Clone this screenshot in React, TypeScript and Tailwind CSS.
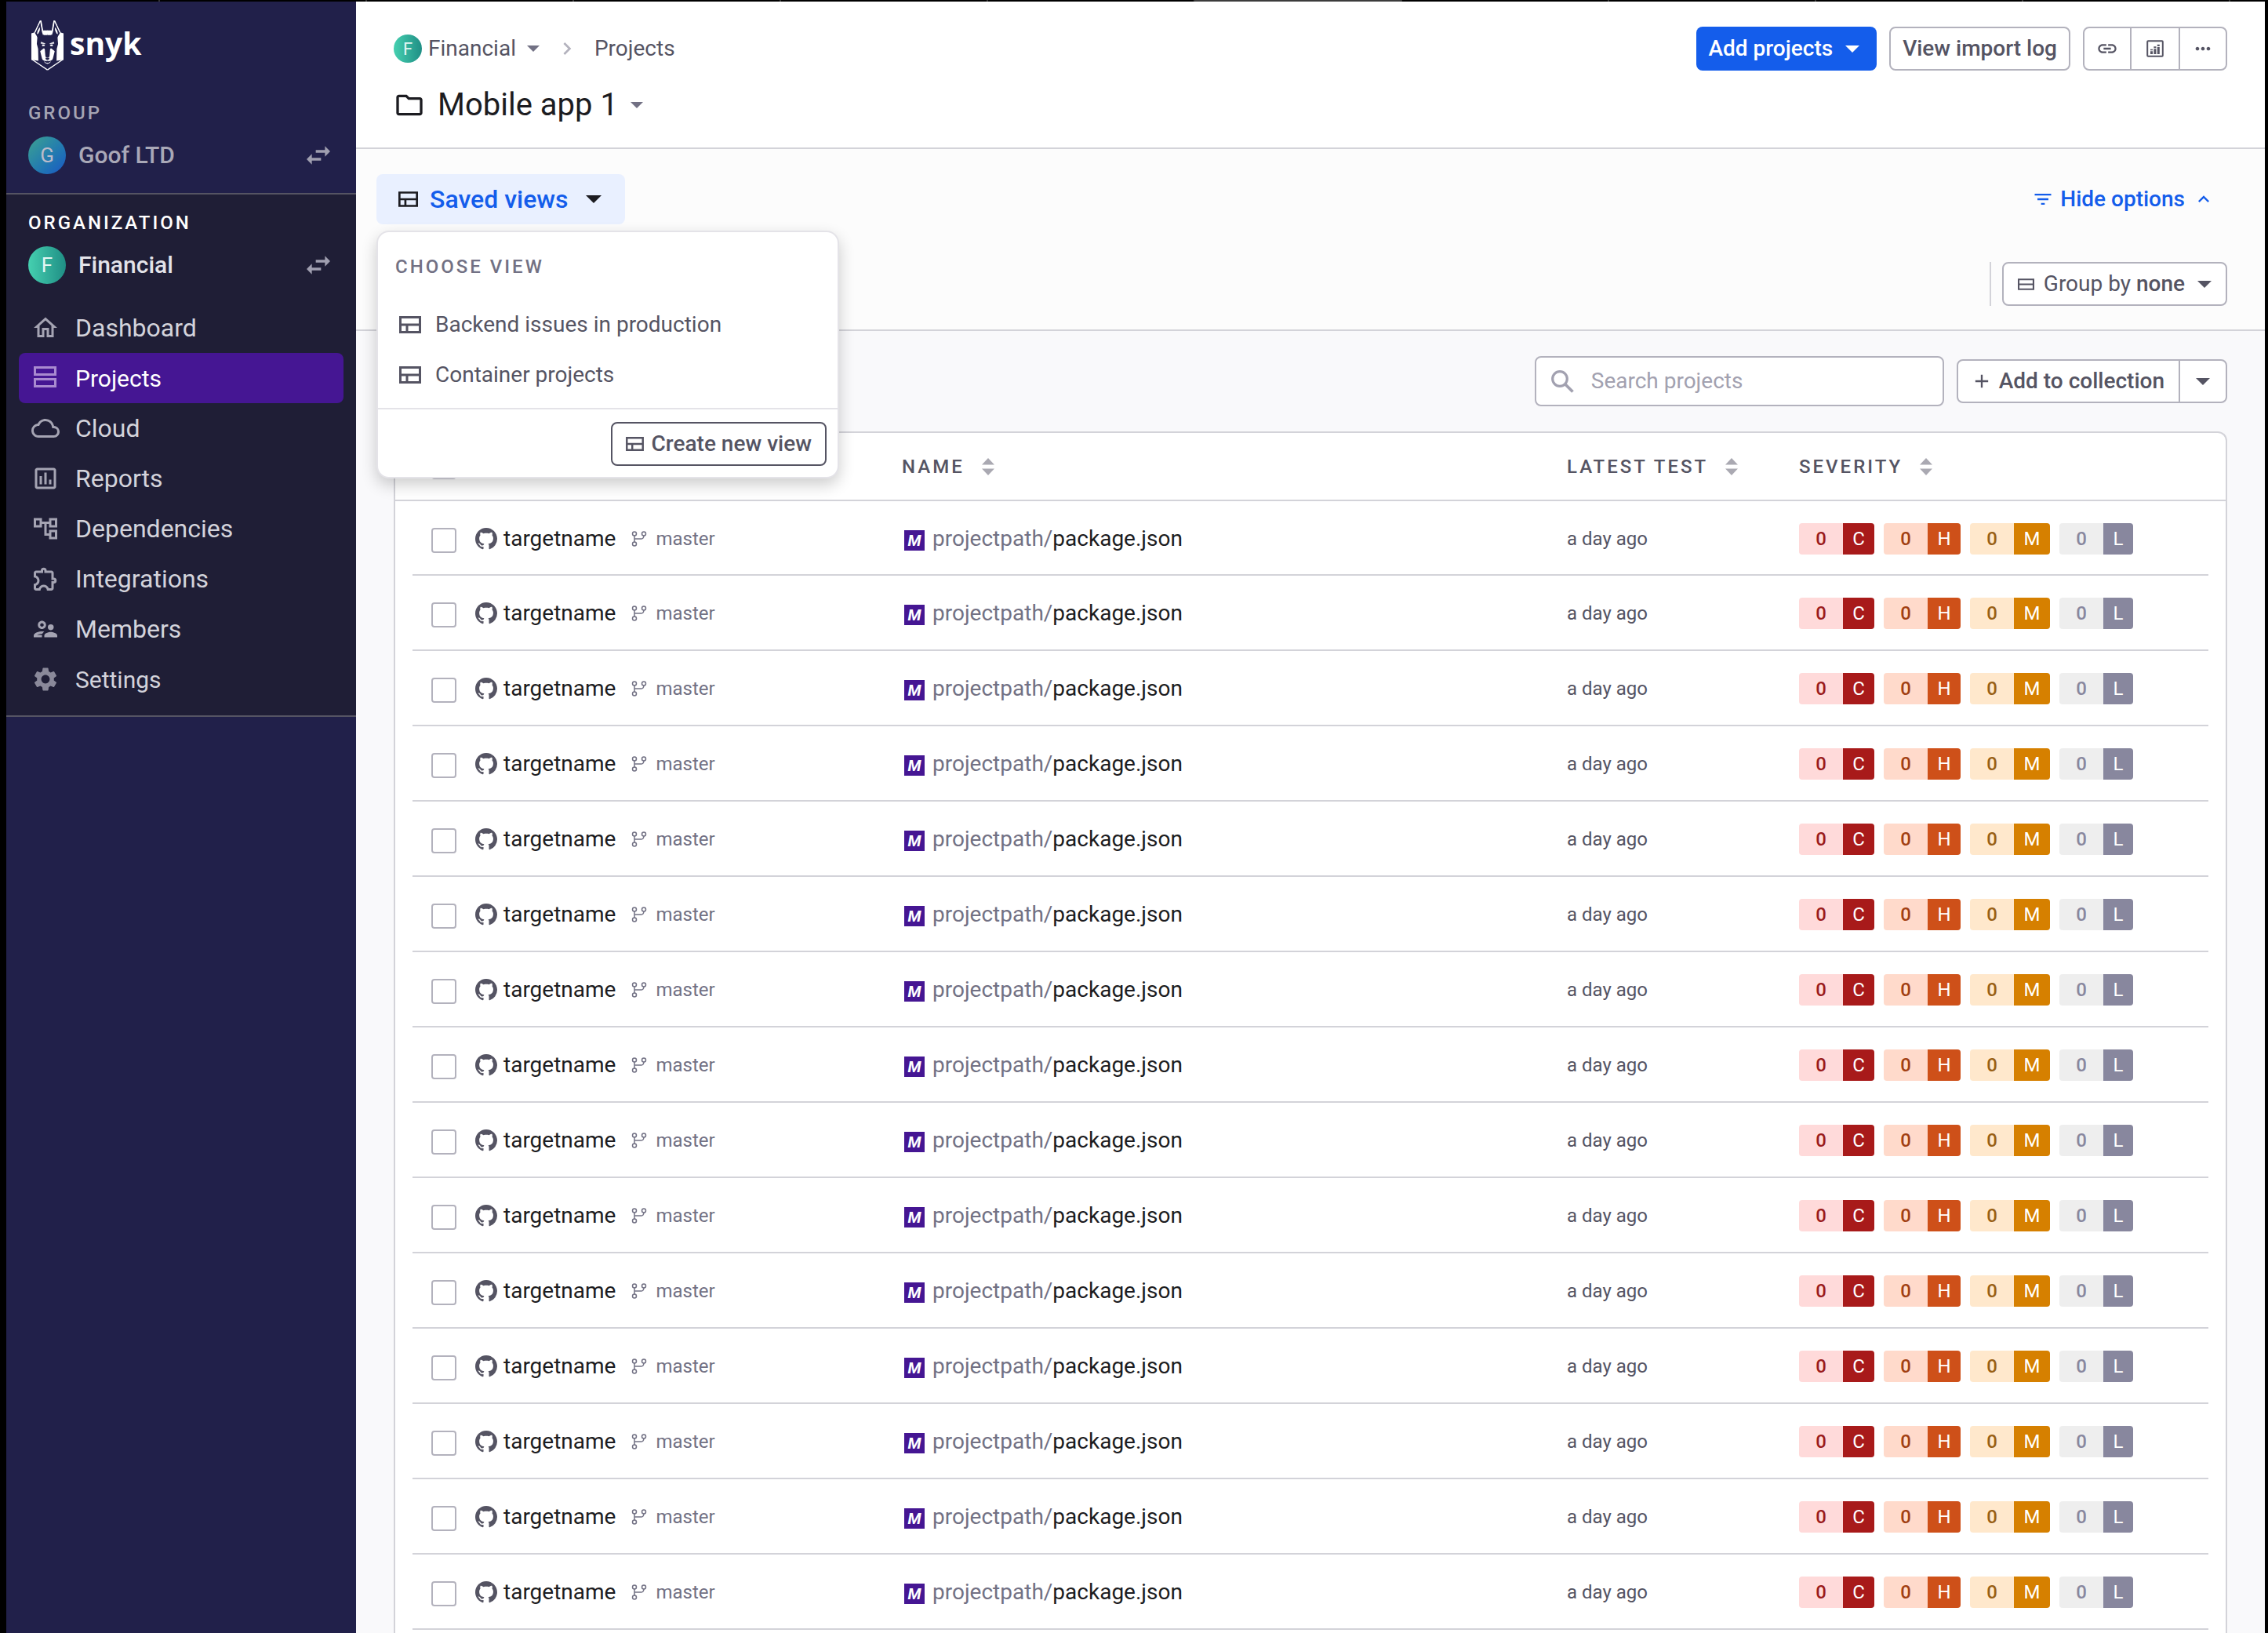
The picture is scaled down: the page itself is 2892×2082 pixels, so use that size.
import React from "react";
import {
  MdAdd,
  MdFilterList,
  MdKeyboardArrowUp,
  MdLink,
  MdMoreHoriz,
  MdNavigateNext,
  MdOutlineAccountTree,
  MdOutlineAssessment,
  MdOutlineCloud,
  MdOutlineExtension,
  MdOutlineFolder,
  MdOutlineHome,
  MdOutlineSupervisorAccount,
  MdSettings,
  MdSwapHoriz,
} from "react-icons/md";

type IconProps = { className?: string };

function Caret({ className }: IconProps) {
  return (
    <svg viewBox="0 0 20 10" className={className} fill="currentColor" aria-hidden="true">
      <path d="M0 0h20L10 10z" />
    </svg>
  );
}

function ViewIcon({ className }: IconProps) {
  return (
    <svg viewBox="0 0 28 22" className={className} fill="none" stroke="currentColor" strokeWidth="3" aria-hidden="true">
      <path d="M1.5 1.5h25v19h-25zM1.5 11h25M10 11v9.500" />
    </svg>
  );
}

function GroupIcon({ className }: IconProps) {
  return (
    <svg viewBox="0 0 20 14" className={className} fill="none" stroke="currentColor" strokeWidth="2" aria-hidden="true">
      <path d="M1 1h18v12H1zM1 7h18" />
    </svg>
  );
}

function AgendaIcon({ className }: IconProps) {
  return (
    <svg viewBox="0 0 36 36" className={className} fill="none" stroke="currentColor" strokeWidth="3" aria-hidden="true">
      <path d="M4.500 4.500h26v9h-26zM4.500 19.500h26v9h-26z" />
    </svg>
  );
}

function ReportIcon({ className }: IconProps) {
  return (
    <svg viewBox="0 0 28 28" className={className} aria-hidden="true">
      <rect x="4.200" y="4.200" width="19.600" height="19.600" rx="1" fill="none" stroke="currentColor" strokeWidth="2" />
      <path
        d="M8 17.300h3V21H8zM12.400 14.300h3V21h-3zM16.800 12h3v9h-3zM8 14.700h3v1.600H8zM12.400 11.300h3v2h-3zM16.800 8.700h3V11h-3z"
        fill="currentColor"
      />
    </svg>
  );
}

function SearchIcon({ className }: IconProps) {
  return (
    <svg viewBox="0 0 29 29" className={className} fill="none" stroke="currentColor" aria-hidden="true">
      <circle cx="11" cy="11" r="9.300" strokeWidth="3.200" />
      <path d="M18 18l9.500 9.500" strokeWidth="3.800" />
    </svg>
  );
}

function BranchIcon({ className }: IconProps) {
  return (
    <svg viewBox="0 0 20 20" className={className} fill="none" stroke="currentColor" strokeWidth="1.500" aria-hidden="true">
      <circle cx="4" cy="3.500" r="2.500" />
      <circle cx="16" cy="3.500" r="2.500" />
      <circle cx="4" cy="16.500" r="2.500" />
      <path d="M4 6v8M4 10h9q2.500 0 3-4" />
    </svg>
  );
}

function GithubIcon({ className }: IconProps) {
  return (
    <svg viewBox="0 0 16 16" className={className} fill="currentColor" aria-hidden="true">
      <path d="M8 0C3.580 0 0 3.580 0 8c0 3.540 2.290 6.530 5.470 7.590.4.070.55-.17.55-.38 0-.19-.01-.82-.01-1.490-2.010.37-2.530-.49-2.690-.94-.09-.23-.48-.94-.82-1.130-.28-.15-.68-.52-.01-.53.63-.01 1.080.58 1.230.82.72 1.210 1.870.87 2.330.66.07-.52.28-.87.51-1.070-1.780-.2-3.640-.89-3.640-3.950 0-.87.31-1.590.82-2.150-.08-.2-.36-1.020.08-2.120 0 0 .67-.21 2.200.82.640-.18 1.320-.27 2-.27s1.360.09 2 .27c1.530-1.040 2.200-.82 2.200-.82.440 1.100.16 1.920.08 2.120.51.56.82 1.270.82 2.150 0 3.070-1.870 3.750-3.650 3.950.29.25.54.73.54 1.480 0 1.070-.01 1.930-.01 2.200 0 .21.15.46.55.38A8.010 8.010 0 0 0 16 8c0-4.420-3.580-8-8-8z" />
    </svg>
  );
}

function SortIcon() {
  return (
    <svg viewBox="0 0 16 22" className="h-[22px] w-4 text-[#aaa9b2]" fill="currentColor" aria-hidden="true">
      <path d="M0 8.500L8 0l8 8.500zM0 13.500L8 22l8-8.500z" />
    </svg>
  );
}

function DogMark() {
  const half = (
    <g>
      <path d="M0 49l13-4L33 1h5l6 39 18-1v17l-14 0-4-10-5 4-6-32-12 26 2 22-2 24 5 19 1 46L0 151z" fill="#fff" />
      <path d="M14 48L34 4l7 38 7 16-22 10z" fill="#21204a" />
      <path d="M13 46L34 2h3l7 40" fill="none" stroke="#fff" strokeWidth="4" />
      <path d="M22 53c0-10 4-20 11-27 1 9-1 16-6 23z" fill="#fff" />
      <path d="M41 44l5-6h17v14H50l-5 4z" fill="#fff" />
      <path d="M38 83l15 6-16-1zM42 93h8l1 4-8 1z" fill="#fff" stroke="#fff" strokeWidth="2" />
      <path d="M34 118l12-10c3-1 6 0 6 5l2 24c2 6 5 6 8 6v13c-12 0-20-2-22-14z" fill="#fff" />
      <path d="M50 159q4 6 13 6" fill="none" stroke="#fff" strokeWidth="3" />
      <path d="M1 149l61 41" fill="none" stroke="#fff" strokeWidth="4" />
    </g>
  );
  return (
    <svg viewBox="0 0 124 192" className="h-16 w-[41px]" aria-hidden="true">
      {half}
      <g transform="matrix(-1 0 0 1 124 0)">{half}</g>
      <path d="M54 144h16l-3 7h-10z" fill="#21204a" />
    </svg>
  );
}

const navItems = [
  { label: "Dashboard", Icon: MdOutlineHome, size: "text-[32px]" },
  { label: "Projects", Icon: AgendaIcon, size: "text-[30px]", active: true },
  { label: "Cloud", Icon: MdOutlineCloud, size: "text-[32px]" },
  { label: "Reports", Icon: MdOutlineAssessment, size: "text-[32px]" },
  { label: "Dependencies", Icon: MdOutlineAccountTree, size: "text-[32px]" },
  { label: "Integrations", Icon: MdOutlineExtension, size: "text-[32px]" },
  { label: "Members", Icon: MdOutlineSupervisorAccount, size: "text-[32px]" },
  { label: "Settings", Icon: MdSettings, size: "text-[30px]", dim: true },
];

function Sidebar() {
  return (
    <aside className="w-[446px] shrink-0 bg-[#21204a]">
      <div className="flex h-[244px] flex-col px-7">
        <a href="#home" className="mt-6 ml-1 flex items-start gap-2" aria-label="snyk">
          <DogMark />
          <span className="font-['Open_Sans'] text-[39px] leading-[58px] font-bold text-white">snyk</span>
        </a>
        <h2 className="mt-[38px] text-[24px] leading-8 font-medium tracking-[3px] text-[#a5a4b3]">GROUP</h2>
        <div className="mt-[14px] flex items-center">
          <span className="flex size-12 items-center justify-center rounded-full bg-linear-to-br from-[#3fa18f] to-[#1f56c4] text-[26px] text-[#bcbccb]">G</span>
          <span className="ml-4 text-[30px] leading-9 font-medium text-[#a9a8b7]">Goof LTD</span>
          <button type="button" aria-label="Switch group" className="ml-auto text-[#a09fb0]">
            <MdSwapHoriz className="size-10" />
          </button>
        </div>
      </div>
      <div className="border-y-2 border-[#555463] bg-[#1f1e36] pb-[14px]">
        <div className="px-7 pt-5">
          <h2 className="text-[24px] leading-8 font-medium tracking-[3px] text-white">ORGANIZATION</h2>
          <div className="mt-[14px] flex items-center">
            <span className="flex size-12 items-center justify-center rounded-full bg-linear-to-r from-[#45d0b0] to-[#1f8f85] text-[26px] text-[#e4f6f3]">F</span>
            <span className="ml-4 text-[30px] leading-9 font-medium text-[#e3e3e9]">Financial</span>
            <button type="button" aria-label="Switch organization" className="ml-auto text-[#a09fb0]">
              <MdSwapHoriz className="size-10" />
            </button>
          </div>
        </div>
        <nav className="mt-6 px-4">
          {navItems.map(({ label, Icon, size, active, dim }) => (
            <a
              key={label}
              href={"#" + label.toLowerCase()}
              aria-current={active ? "page" : undefined}
              className={
                "flex h-16 items-center gap-5 rounded-lg px-4 " +
                size +
                (active ? " bg-[#451693] text-white" : " text-[#d3d3db]")
              }
            >
              <Icon className={"size-9 " + (active ? "text-[#a98ad0]" : dim ? "text-[#8a899a]" : "text-[#a5a4b3]")} />
              {label}
            </a>
          ))}
        </nav>
      </div>
    </aside>
  );
}

const outline = "border-2 border-[#b3b2bd] bg-white text-[#555463]";

function Header() {
  return (
    <header className="border-b-2 border-[#d3d3d9] bg-white px-12 pt-8 pb-[30px]">
      <div className="flex items-center">
        <nav aria-label="Breadcrumb" className="flex items-center text-[28px] text-[#555463]">
          <button type="button" className="flex items-center">
            <span className="mr-2 flex size-9 items-center justify-center rounded-full bg-linear-to-r from-[#45d0b0] to-[#1f8f85] text-[22px] text-[#e4f6f3]">F</span>
            Financial
            <Caret className="ml-[14px] h-2 w-4 text-[#727184]" />
          </button>
          <MdNavigateNext className="mx-[19px] size-8 text-[#b3b2bd]" />
          <a href="#projects">Projects</a>
        </nav>
        <div className="ml-auto flex gap-4 text-[28px] font-medium">
          <button type="button" className="flex h-14 items-center rounded-lg bg-[#145deb] pr-[22px] pl-4 text-white">
            Add projects
            <Caret className="ml-4 h-[9px] w-[18px]" />
          </button>
          <button type="button" className={"h-14 rounded-lg px-[15px] " + outline}>
            View import log
          </button>
          <div className={"flex h-14 divide-x-2 divide-[#b3b2bd] rounded-lg " + outline}>
            <button type="button" aria-label="Copy link" className="flex w-[60px] items-center justify-center">
              <MdLink className="size-7" />
            </button>
            <button type="button" aria-label="Report" className="flex w-[62px] items-center justify-center">
              <ReportIcon className="size-7" />
            </button>
            <button type="button" aria-label="More" className="flex w-[58px] items-center justify-center">
              <MdMoreHoriz className="size-7" />
            </button>
          </div>
        </div>
      </div>
      <h1 className="mt-5 flex items-center text-[40px] leading-[48px] text-[#1c1c21]">
        <MdOutlineFolder className="mr-4 size-10" />
        Mobile app 1
        <button type="button" aria-label="Switch collection" className="ml-4">
          <Caret className="h-2 w-4 text-[#727184]" />
        </button>
      </h1>
    </header>
  );
}

function SavedViewsMenu() {
  return (
    <div className="absolute top-[72px] left-0 z-10 w-[590px] rounded-2xl border-2 border-[#e4e3e8] bg-white text-[28px] text-[#555463] shadow-[0_8px_20px_rgba(0,0,0,0.2)]">
      <h2 className="mt-7 mb-[26px] px-[22px] text-[24px] leading-8 font-medium tracking-[3px] text-[#727184]">CHOOSE VIEW</h2>
      <ul className="pb-[10px]">
        {["Backend issues in production", "Container projects"].map((name) => (
          <li key={name}>
            <button type="button" className="flex h-16 w-full items-center gap-[18px] px-[27px]">
              <ViewIcon className="h-[22px] w-7" />
              {name}
            </button>
          </li>
        ))}
      </ul>
      <div className="flex justify-end border-t-2 border-[#e4e3e8] pt-4 pr-[14px] pb-[14px]">
        <button type="button" className="flex h-14 items-center gap-[10px] rounded-lg border-2 border-[#555463] px-[17px] font-medium">
          <ViewIcon className="h-[18px] w-[23px]" />
          Create new view
        </button>
      </div>
    </div>
  );
}

function OptionsBar() {
  return (
    <section className="border-b-2 border-[#d3d3d9] bg-[#fcfcfc] pt-8 pr-12 pb-[30px] pl-[26px]">
      <div className="flex items-center justify-between">
        <div className="relative">
          <button type="button" aria-expanded="true" className="flex h-16 items-center rounded-lg bg-[#e9f0ff] pr-[30px] pl-7 text-[32px] font-medium text-[#145deb]">
            <ViewIcon className="mr-[15px] h-5 w-[25px] text-[#1c1c21]" />
            Saved views
            <Caret className="ml-[22px] h-[10px] w-5 text-[#1c1c21]" />
          </button>
          <SavedViewsMenu />
        </div>
        <button type="button" className="flex items-center pr-4 text-[28px] font-medium text-[#145deb]">
          <MdFilterList className="mr-2 size-7" />
          Hide options
          <MdKeyboardArrowUp className="ml-[10px] size-7" />
        </button>
      </div>
      <div className="mt-12 flex justify-end gap-[14px]">
        <div className="w-0.5 bg-[#d3d3d9]" />
        <button type="button" className={"flex h-14 items-center rounded-lg px-[18px] text-[28px] " + outline}>
          <GroupIcon className="mr-3 h-[15px] w-[21px]" />
          <span>
            Group by <b className="font-medium">none</b>
          </span>
          <Caret className="ml-4 h-[9px] w-[18px]" />
        </button>
      </div>
    </section>
  );
}

function CollectionBar() {
  return (
    <div className="flex items-center justify-end gap-4 pt-8 pb-8 text-[28px]">
      <label className={"flex h-16 w-[522px] items-center gap-[22px] rounded-lg px-[19px] " + outline}>
        <SearchIcon className="size-[29px] shrink-0 text-[#a2a1b0]" />
        <input
          type="text"
          aria-label="Search projects"
          placeholder="Search projects"
          className="w-full min-w-0 bg-transparent outline-none placeholder:text-[#a2a1b0]"
        />
      </label>
      <div className={"flex h-14 rounded-lg font-medium " + outline}>
        <button type="button" className="flex items-center gap-2 pr-[18px] pl-4">
          <MdAdd className="size-7" />
          Add to collection
        </button>
        <button type="button" aria-label="More collection actions" className="flex items-center border-l-2 border-[#b3b2bd] px-5">
          <Caret className="h-[9px] w-[18px]" />
        </button>
      </div>
    </div>
  );
}

const severities = [
  { letter: "C", count: "bg-[#ffdada] text-[#9b1c1c]", tag: "w-10 bg-[#a81a1a]" },
  { letter: "H", count: "bg-[#ffdacb] text-[#a23f12]", tag: "w-[42px] bg-[#ce5019]" },
  { letter: "M", count: "bg-[#ffe8cc] text-[#996015]", tag: "w-[46px] bg-[#d68000]" },
  { letter: "L", count: "bg-[#eeeeee] text-[#88879e]", tag: "w-[38px] bg-[#88879e]" },
];

function SeverityBadges() {
  return (
    <div className="flex gap-3">
      {severities.map(({ letter, count, tag }) => (
        <span key={letter} className="flex h-10 overflow-hidden rounded text-[24px]">
          <span className={"flex w-14 items-center justify-center font-medium " + count}>0</span>
          <span className={"flex items-center justify-center text-white " + tag}>{letter}</span>
        </span>
      ))}
    </div>
  );
}

const box = "block size-8 appearance-none rounded border-2 border-[#b3b2bd] bg-white";
const rows = Array.from({ length: 15 }, (_, i) => ({
  id: i,
  target: "targetname",
  branch: "master",
  path: "projectpath/",
  file: "package.json",
  tested: "a day ago",
}));

function SortHeader({ children }: { children: React.ReactNode }) {
  return (
    <button type="button" className="flex items-center gap-[22px] font-medium tracking-[3px]">
      {children}
      <SortIcon />
    </button>
  );
}

function ProjectsTable() {
  return (
    <div className="grow rounded-t-xl border-2 border-b-0 border-[#d3d3d9] bg-white">
      <table className="w-full table-fixed border-collapse text-left">
        <colgroup>
          <col className="w-[646px]" />
          <col />
          <col className="w-[296px]" />
          <col className="w-[544px]" />
        </colgroup>
        <thead>
          <tr className="h-[86px] border-b-2 border-[#d3d3d9] text-[24px] text-[#555463]">
            <th className="py-0 pl-[46px]">
              <input type="checkbox" aria-label="Select all projects" className={box} />
            </th>
            <th><SortHeader>NAME</SortHeader></th>
            <th><SortHeader>LATEST TEST</SortHeader></th>
            <th><SortHeader>SEVERITY</SortHeader></th>
          </tr>
        </thead>
        <tbody>
          {rows.map((row) => (
            <tr key={row.id} className="relative h-24">
              <td className="pl-[46px] after:absolute after:inset-x-[22px] after:bottom-0 after:h-0.5 after:bg-[#d3d3d9]">
                <div className="flex items-center">
                  <input type="checkbox" aria-label={"Select project " + (row.id + 1)} className={box + " mt-1"} />
                  <GithubIcon className="ml-6 size-7 text-[#555463]" />
                  <a href="#target" className="ml-2 text-[28px] text-[#1c1c21]">{row.target}</a>
                  <BranchIcon className="ml-5 size-5 text-[#727184]" />
                  <span className="ml-[11px] text-[24px] text-[#727184]">{row.branch}</span>
                </div>
              </td>
              <td>
                <div className="flex items-center">
                  <span aria-hidden="true" className="mt-1 mr-[10px] ml-[3px] flex size-[26px] items-center justify-center bg-[#451693] text-[20px] leading-none font-bold text-white italic">M</span>
                  <a href="#project" className="text-[28px] text-[#1c1c21]">
                    <span className="text-[#727184]">{row.path}</span>
                    {row.file}
                  </a>
                </div>
              </td>
              <td className="text-[24px] text-[#555463]">{row.tested}</td>
              <td><SeverityBadges /></td>
            </tr>
          ))}
        </tbody>
      </table>
    </div>
  );
}

function TabStrip() {
  return (
    <div className="flex h-0.5 bg-black pl-[194px]" aria-hidden="true">
      {Array.from({ length: 11 }, (_, i) => (
        <div key={i} className={"w-[264px] shrink-0 border-l-2 border-[#333333] " + (i === 5 ? "bg-[#3c3c3c]" : "")} />
      ))}
    </div>
  );
}

export default function App() {
  return (
    <div className="flex h-screen flex-col overflow-hidden bg-black pr-1 pl-2 font-['Roboto',sans-serif]">
      <TabStrip />
      <div className="flex min-h-0 grow">
        <Sidebar />
        <main className="flex min-w-0 grow flex-col bg-[#f9f9fb]">
          <Header />
          <OptionsBar />
          <div className="flex grow flex-col px-12">
            <CollectionBar />
            <ProjectsTable />
          </div>
        </main>
      </div>
    </div>
  );
}
